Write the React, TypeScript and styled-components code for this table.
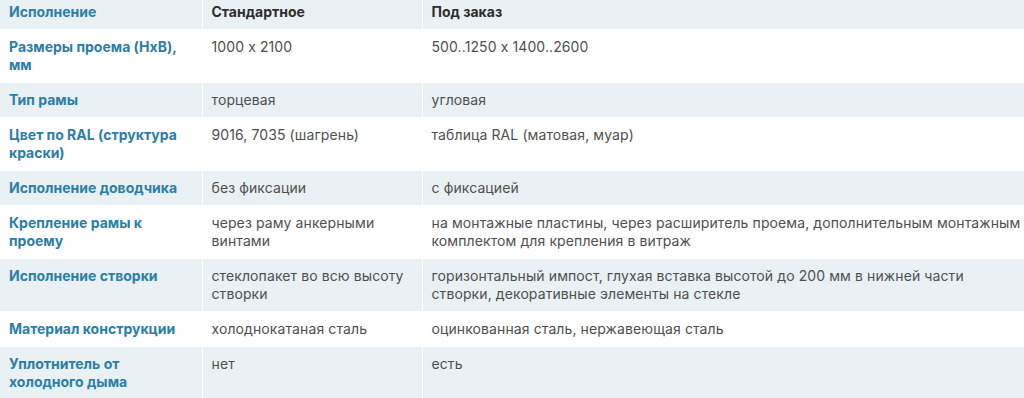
import styled, { createGlobalStyle } from "styled-components";

const GlobalStyle = createGlobalStyle`
  html, body {
    margin: 0;
    padding: 0;
    background: #fff;
  }
  body {
    font-family: Inter, "Noto Sans", sans-serif;
    font-feature-settings: "calt" 0;
  }
`;

const rows: [string, string, string][] = [
  ["Размеры проема (НxВ), мм", "1000 x 2100", "500..1250 x 1400..2600"],
  ["Тип рамы", "торцевая", "угловая"],
  ["Цвет по RAL (структура краски)", "9016, 7035 (шагрень)", "таблица RAL (матовая, муар)"],
  ["Исполнение доводчика", "без фиксации", "с фиксацией"],
  [
    "Крепление рамы к проему",
    "через раму анкерными винтами",
    "на монтажные пластины, через расширитель проема, дополнительным монтажным комплектом для крепления в витраж",
  ],
  [
    "Исполнение створки",
    "стеклопакет во всю высоту створки",
    "горизонтальный импост, глухая вставка высотой до 200 мм в нижней части створки, декоративные элементы на стекле",
  ],
  ["Материал конструкции", "холоднокатаная сталь", "оцинкованная сталь, нержавеющая сталь"],
  ["Уплотнитель от холодного дыма", "нет", "есть"],
];

export default function App() {
  return (
    <>
      <GlobalStyle />
      <SpecTable>
        <colgroup>
          <col style={{ width: 202 }} />
          <col style={{ width: 220 }} />
          <col />
        </colgroup>
        <thead>
          <Row>
            <NameCell as="th" $head>Исполнение</NameCell>
            <HeadCell $head>Стандартное</HeadCell>
            <HeadCell $head>Под заказ</HeadCell>
          </Row>
        </thead>
        <tbody>
          {rows.map((r) => (
            <Row key={r[0]}>
              <NameCell>{r[0]}</NameCell>
              <ValueCell>{r[1]}</ValueCell>
              <ValueCell>{r[2]}</ValueCell>
            </Row>
          ))}
        </tbody>
      </SpecTable>
    </>
  );
}

const SpecTable = styled.table`
  width: 100%;
  table-layout: fixed;
  border-collapse: collapse;
  font-size: 14px;
  line-height: 18px;
`;

const Row = styled.tr`
  background: #fff;

  thead & {
    background: #e9f1f4;
  }

  tbody &:nth-child(odd) {
    background: #fff;
  }

  tbody &:nth-child(even) {
    background: #e9f1f4;
  }
`;

const Cell = styled.td<{ $head?: boolean }>`
  padding: ${(p) => (p.$head ? "3px 9px 8px" : "8px 9px 8px")};
  border: 1px solid #fff;
  border-top: none;
  text-align: left;
  vertical-align: top;
  &:first-child {
    border-left: none;
  }
  &:last-child {
    border-right: none;
    padding-right: 0;
  }
`;

const NameCell = styled(Cell)`
  font-weight: 700;
  color: #2b7ea6;
`;

const HeadCell = styled(Cell).attrs({ as: "th" })`
  font-weight: 700;
  color: #2d2d2d;
`;

const ValueCell = styled(Cell)`
  font-weight: 400;
  color: #4f4f4f;
  letter-spacing: 0.1px;
`;
